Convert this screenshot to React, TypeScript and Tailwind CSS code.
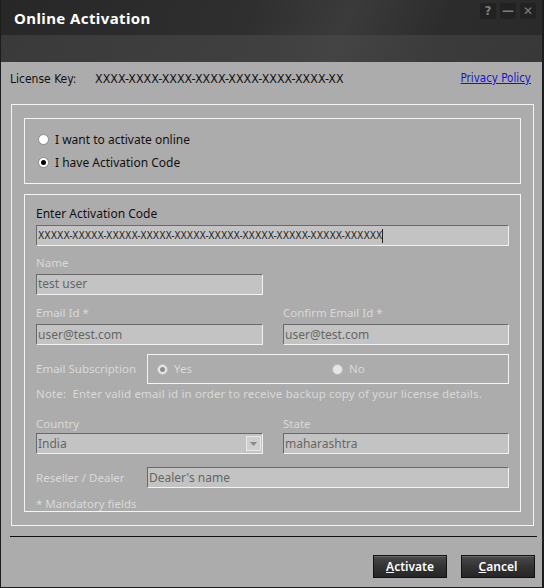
import React from 'react';

const ui = { fontFamily: '"Noto Sans", "Open Sans", sans-serif' };
const tahoma = { fontFamily: '"DejaVu Sans Condensed", "Liberation Sans", sans-serif' };

function Field({ value, className = '' }: { value: string; className?: string }) {
  return (
    <div
      className={`h-[21px] bg-[#c3c3c3] border border-t-[#6a6a6a] border-l-[#6a6a6a] border-b-[#f2f2f2] border-r-[#f2f2f2] flex items-center px-[1px] text-[12px] text-[#666] ${className}`}
      style={ui}
    >
      {value}
    </div>
  );
}

function Label({ children, className = '' }: { children: React.ReactNode; className?: string }) {
  return (
    <div className={`text-[11.5px] text-[#d9d9d9] leading-none ${className}`} style={ui}>
      {children}
    </div>
  );
}

function Radio({ checked, light }: { checked?: boolean; light?: boolean }) {
  return (
    <span
      className={`inline-flex items-center justify-center w-[11px] h-[11px] rounded-full border ${light ? 'border-[#bbb] bg-[#e6e6e6]' : 'border-[#8a8a8a] bg-white'}`}
    >
      {checked && <span className={`w-[5px] h-[5px] rounded-full ${light ? 'bg-[#8d8d8d]' : 'bg-black'}`} />}
    </span>
  );
}

export default function App() {
  return (
    <div className="w-[544px] h-[588px] bg-[#acacac] border-l border-r-2 border-b border-[#1c1c1c] flex flex-col overflow-hidden">
      {/* title bar */}
      <div className="h-[62px] flex flex-col bg-[linear-gradient(115deg,#272727_0%,#2f2f2f_45%,#3b3b3b_62%,#2c2c2c_80%,#2a2a2a_100%)]">
        <div className="h-[35px] flex items-start justify-between pl-[13px] pr-[6px]">
          <div className="text-[15px] font-bold text-white tracking-[0.4px] mt-[7px]" style={ui}>
            Online Activation
          </div>
          <div className="flex gap-[4px] mt-[3px]">
            {['?', '—', '✕'].map((g) => (
              <div
                key={g}
                className="w-[16px] h-[16px] bg-[#222] rounded-[2px] flex items-center justify-center text-[12px] font-bold text-[#7d7d7d]"
                style={{ fontFamily: '"DejaVu Sans", sans-serif' }}
              >
                {g}
              </div>
            ))}
          </div>
        </div>
        <div className="flex-1 bg-[linear-gradient(115deg,#3a3a3a_0%,#404040_50%,#444_62%,#3b3b3b_80%,#383838_100%)]" />
      </div>

      {/* license row */}
      <div className="h-[34px] flex items-center pl-[9px] pr-[11px] text-[12px] text-[#111]" style={tahoma}>
        <span className="w-[85px]">License Key:</span>
        <span className="text-[12.4px]">XXXX-XXXX-XXXX-XXXX-XXXX-XXXX-XXXX-XX</span>
        <span className="ml-auto text-[11.5px] text-[#1515d6] underline" style={tahoma}>Privacy Policy</span>
      </div>

      {/* outer group */}
      <div className="mt-[8px] ml-[10px] w-[523px] h-[422px] border border-[#f4f4f4] pt-[13px] pl-[12px] flex flex-col">
        <div className="w-[497px] h-[66px] border border-[#f4f4f4] flex flex-col justify-center gap-[11px] pl-[13px]" style={ui}>
          <div className="flex items-center gap-[6px] text-[12px] text-[#111] leading-none">
            <Radio />
            <span>I want to activate online</span>
          </div>
          <div className="flex items-center gap-[6px] text-[12px] text-[#111] leading-none">
            <Radio checked />
            <span>I have Activation Code</span>
          </div>
        </div>

        <div className="mt-[10px] w-[497px] h-[318px] border border-[#f4f4f4] px-[11px] pt-[13px] flex flex-col">
          <div className="text-[12px] text-[#111] leading-none" style={ui}>Enter Activation Code</div>
          <div
            className="mt-[5px] h-[21px] bg-[#c3c3c3] border border-t-[#6a6a6a] border-l-[#6a6a6a] border-b-[#f2f2f2] border-r-[#f2f2f2] flex items-center pl-[1px] text-[10.3px] text-[#222]"
            style={tahoma}
          >
            XXXXX-XXXXX-XXXXX-XXXXX-XXXXX-XXXXX-XXXXX-XXXXX-XXXXX-XXXXXX
            <span className="w-px h-[14px] bg-[#222]" />
          </div>

          <Label className="mt-[11px]">Name</Label>
          <Field value="test user" className="mt-[5px] w-[227px]" />

          <div className="mt-[12px] flex gap-[20px]">
            <div className="w-[227px] flex flex-col">
              <Label>Email Id *</Label>
              <Field value="user@test.com" className="mt-[6px]" />
            </div>
            <div className="w-[226px] flex flex-col">
              <Label>Confirm Email Id *</Label>
              <Field value="user@test.com" className="mt-[6px]" />
            </div>
          </div>

          <div className="mt-[9px] flex items-center">
            <Label className="w-[111px]">Email Subscription</Label>
            <div className="w-[362px] h-[30px] border border-[#f4f4f4] flex items-center pl-[9px]">
              <div className="flex items-center gap-[6px] w-[175px]">
                <Radio checked light />
                <Label>Yes</Label>
              </div>
              <div className="flex items-center gap-[6px]">
                <Radio light />
                <Label>No</Label>
              </div>
            </div>
          </div>

          <Label className="mt-[4px] tracking-[0.15px]">Note:&nbsp; Enter valid email id in order to receive backup copy of your license details.</Label>

          <div className="mt-[18px] flex gap-[20px]">
            <div className="w-[227px] flex flex-col">
              <Label>Country</Label>
              <div className="mt-[4px] h-[21px] bg-[#c3c3c3] border border-t-[#6a6a6a] border-l-[#6a6a6a] border-b-[#f2f2f2] border-r-[#f2f2f2] flex items-center pl-[1px] text-[12px] text-[#666]" style={ui}>
                India
                <div className="ml-auto mr-[1px] w-[15px] h-[15px] bg-[#cfcfcf] border border-[#e8e8e8] flex items-center justify-center">
                  <svg width="7" height="4" viewBox="0 0 7 4">
                    <path d="M0 0h7L3.5 4z" fill="#8a8a8a" />
                  </svg>
                </div>
              </div>
            </div>
            <div className="w-[226px] flex flex-col">
              <Label>State</Label>
              <Field value="maharashtra" className="mt-[4px]" />
            </div>
          </div>

          <div className="mt-[13px] flex items-center">
            <Label className="w-[111px]">Reseller / Dealer</Label>
            <Field value="Dealer's name" className="w-[362px]" />
          </div>

          <Label className="mt-[10px]">* Mandatory fields</Label>
        </div>
      </div>

      {/* separator */}
      <div className="mt-[10px] ml-[9px] w-[527px] h-px bg-[#111]" />

      {/* buttons */}
      <div className="mt-[18px] flex justify-end gap-[14px] pr-[7px]">
        {[['A', 'ctivate'], ['C', 'ancel']].map(([a, rest]) => (
          <button
            key={a}
            className="w-[74px] h-[23px] border border-[#111] bg-[linear-gradient(180deg,#4a4a4a_0%,#333_50%,#262626_100%)] shadow-[inset_0_1px_0_#6a6a6a] text-[12px] font-semibold text-white"
            style={ui}
          >
            <span className="underline">{a}</span>
            {rest}
          </button>
        ))}
      </div>
    </div>
  );
}
